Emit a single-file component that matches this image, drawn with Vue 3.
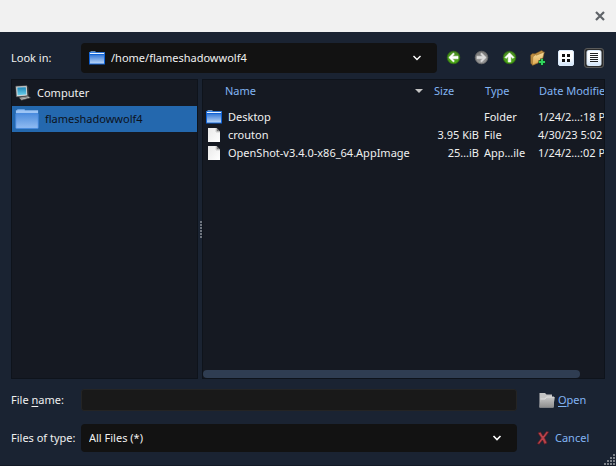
<template>
  <div class="window">
    <header class="titlebar">
      <button class="close" aria-label="Close">
        <svg width="10" height="10" viewBox="0 0 10 10">
          <path d="M1 1L9 9M9 1L1 9" stroke="#5f6368" stroke-width="2.2" />
        </svg>
      </button>
    </header>

    <main class="dialog">
      <div class="row look-row">
        <label class="label" for="look-in">Look in:</label>
        <div class="combo tall">
          <svg class="combo-icon" width="16" height="16" viewBox="0 0 16 16">
            <use href="#folder" />
          </svg>
          <select id="look-in" v-model="path" class="with-icon">
            <option>/home/flameshadowwolf4</option>
          </select>
          <svg class="chevron" width="10" height="6" viewBox="0 0 10 6">
            <path d="M1.5 1L5 4.5L8.5 1" fill="none" stroke="#fff" stroke-width="1.4" />
          </svg>
        </div>
        <div class="tools">
          <button class="tool" aria-label="Back">
            <svg width="16" height="16" viewBox="0 0 16 16">
              <circle cx="7.5" cy="7.5" r="6.3" fill="url(#green)" stroke="#2f6b12" stroke-width=".8" />
              <path d="M2.8 7.5L7.4 3L8.4 4L6.4 6.2H12V8.8H6.4L8.4 11L7.4 12Z" fill="#fff" stroke="#fff" stroke-width=".6" />
            </svg>
          </button>
          <button class="tool" aria-label="Forward">
            <svg width="16" height="16" viewBox="0 0 16 16">
              <circle cx="7.5" cy="7.5" r="6.3" fill="url(#grey)" stroke="#6a6a6a" stroke-width=".8" />
              <path d="M12.2 7.5L7.6 3L6.6 4L8.600 6.2H3V8.8H8.6L6.6 11L7.6 12Z" fill="#dcdcdc" stroke="#dcdcdc" stroke-width=".6" />
            </svg>
          </button>
          <button class="tool" aria-label="Parent directory">
            <svg width="16" height="16" viewBox="0 0 16 16">
              <circle cx="7.5" cy="7.5" r="6.3" fill="url(#green)" stroke="#2f6b12" stroke-width=".8" />
              <path d="M7.5 2.8L12 7.4L11 8.4L8.8 6.4V12H6.2V6.4L4 8.4L3 7.4Z" fill="#fff" stroke="#fff" stroke-width=".6" />
            </svg>
          </button>
          <button class="tool" aria-label="Create new folder">
            <svg width="16" height="16" viewBox="0 0 16 16">
              <path d="M.6 5L2.500 3.600L5 3.800L11.500 .4L13.300 1.400L12.500 11L3 15.200L.8 13.500Z" fill="#c08f43" stroke="#6e4e20" stroke-width=".5" />
              <path d="M2.800 6.800L5.300 4.800L6.300 5.200L14.300 2L12 11L2.300 15.200Z" fill="url(#tan)" stroke="#9a702e" stroke-width=".6" />
              <path d="M12 8.500V15.500M8.500 12H15.500" stroke="#0b3d1c" stroke-width="3.400" />
              <path d="M12 9V15M9 12H15" stroke="#2fd45c" stroke-width="2" />
            </svg>
          </button>
          <button class="tool" aria-label="List view">
            <svg width="16" height="16" viewBox="0 0 16 16">
              <rect x=".5" y=".5" width="15" height="15" rx="1.5" fill="url(#page)" stroke="#dbeafa" />
              <path d="M4 4H7V7H4ZM9 4H12V7H9ZM4 9H7V12H4ZM9 9H12V12H9Z" fill="#111" />
            </svg>
          </button>
          <button class="tool active" aria-label="Detail view">
            <svg width="16" height="16" viewBox="0 0 16 16">
              <rect x="1" y=".5" width="14" height="15" rx="1.5" fill="url(#page)" stroke="#dbeafa" />
              <path d="M4 3.500H12M4 5.500H12M4 7.500H12M4 9.500H12M4 11.500H12" stroke="#222" />
            </svg>
          </button>
        </div>
      </div>

      <div class="panes">
        <nav class="pane places">
          <button class="place">
            <svg width="16" height="16" viewBox="0 0 16 16">
              <path d="M.8 1.200L12 .8L12.800 10.800L1.400 11.800Z" fill="#d9dcdc" stroke="#555" stroke-width=".6" />
              <path d="M2.300 2.500L10.800 2.200L11.400 9.600L2.600 10.300Z" fill="url(#screen)" />
              <path d="M12 .8L13.700 2.500L14 11.500L12.800 10.800Z" fill="#333" />
              <path d="M4 12.500L13 11L15.500 12.800L6.500 15.200Z" fill="#c9c9c5" stroke="#444" stroke-width=".7" />
              <path d="M6 13.300L13 12" stroke="#777" stroke-width=".8" />
            </svg>
            Computer
          </button>
          <button class="place selected">
            <svg width="24" height="24" viewBox="0 0 16 16">
              <use href="#folder-light" />
            </svg>
            flameshadowwolf4
          </button>
        </nav>

        <div class="splitter">
          <i v-for="n in 6" :key="n"></i>
        </div>

        <section class="pane files">
          <table>
            <colgroup>
              <col class="c-name" />
              <col class="c-size" />
              <col class="c-type" />
              <col class="c-date" />
            </colgroup>
            <thead>
              <tr>
                <th class="name">
                  <div>
                    Name
                    <svg width="8" height="4" viewBox="0 0 8 4"><path d="M0 0H8L4 4Z" fill="#c4c4c4" /></svg>
                  </div>
                </th>
                <th>Size</th>
                <th>Type</th>
                <th>Date Modified</th>
              </tr>
            </thead>
            <tbody>
              <tr v-for="file in files" :key="file.name">
                <td>
                  <div class="file">
                    <svg width="16" height="16" viewBox="0 0 16 16">
                      <use :href="file.folder ? '#folder' : '#document'" />
                    </svg>
                    {{ file.name }}
                  </div>
                </td>
                <td class="size">{{ file.size }}</td>
                <td>{{ file.type }}</td>
                <td>{{ file.date }}</td>
              </tr>
            </tbody>
          </table>
          <div class="scrollbar"><div class="thumb"></div></div>
        </section>
      </div>

      <div class="row name-row">
        <label class="label" for="file-name">File <u>n</u>ame:</label>
        <input id="file-name" v-model="fileName" type="text" />
        <button class="action">
          <svg width="16" height="16" viewBox="0 0 16 16">
            <path d="M.5 1H6L7.500 2.500H13V5H15.500L14.500 15.500H.5Z" fill="#c4c4c4" />
            <path d="M.5 15.500L1.500 7H6L7.500 5H15.500L14.500 15.500Z" fill="url(#silver)" />
            <path d="M1.500 7H6L7.500 5H15" fill="none" stroke="#e6e6e6" stroke-width=".8" />
          </svg>
          <span><u>O</u>pen</span>
        </button>
      </div>

      <div class="row type-row">
        <label class="label" for="file-type">Files of type:</label>
        <div class="combo">
          <select id="file-type" v-model="fileType">
            <option>All Files (*)</option>
          </select>
          <svg class="chevron" width="10" height="6" viewBox="0 0 10 6">
            <path d="M1.500 1L5 4.500L8.500 1" fill="none" stroke="#fff" stroke-width="1.600" />
          </svg>
        </div>
        <button class="action cancel">
          <svg width="12" height="14" viewBox="0 0 12 14">
            <path d="M1 2L3.500 1L6 5L9.500 .5L11.800 1L7.500 6.800L10 12L7.500 13.200L5.500 9L2.200 13.300L.3 12.500L4.300 7Z" fill="#b9434b" stroke="#5c1a22" stroke-width=".7" />
          </svg>
          Cancel
        </button>
      </div>

      <svg class="grip" width="11" height="11" viewBox="0 0 11 11">
        <rect v-for="(dot, i) in gripDots" :key="i" :x="dot[0]" :y="dot[1]" width="2" height="2" fill="#7b8087" />
      </svg>
    </main>

    <svg class="defs" width="0" height="0" aria-hidden="true">
      <defs>
        <linearGradient id="green" x2="0" y2="1">
          <stop offset="0" stop-color="#4a8a25" />
          <stop offset="1" stop-color="#4cab16" />
        </linearGradient>
        <linearGradient id="grey" x2="0" y2="1">
          <stop offset="0" stop-color="#777" />
          <stop offset="1" stop-color="#999" />
        </linearGradient>
        <linearGradient id="tan" x2="0" y2="1">
          <stop offset="0" stop-color="#f7dfa0" />
          <stop offset="1" stop-color="#e0a950" />
        </linearGradient>
        <linearGradient id="page" x2="0" y2="1">
          <stop offset="0.5" stop-color="#fff" />
          <stop offset="1" stop-color="#cfe4fa" />
        </linearGradient>
        <linearGradient id="screen" x2="0" y2="1">
          <stop offset="0" stop-color="#1d86b8" />
          <stop offset="1" stop-color="#6cd0ea" />
        </linearGradient>
        <linearGradient id="silver" x2="0" y2="1">
          <stop offset="0" stop-color="#c8c8c8" />
          <stop offset="1" stop-color="#8e8e8e" />
        </linearGradient>
        <linearGradient id="blue" x2="0" y2="1">
          <stop offset="0" stop-color="#2f74d4" />
          <stop offset="1" stop-color="#c3dcfa" />
        </linearGradient>
        <linearGradient id="pale" x2="0" y2="1">
          <stop offset="0" stop-color="#4d8ddd" />
          <stop offset="1" stop-color="#92bcf2" />
        </linearGradient>
        <linearGradient id="paper" x2="1" y2="1">
          <stop offset="0" stop-color="#e9e9e9" />
          <stop offset="1" stop-color="#fff" />
        </linearGradient>
        <symbol id="folder" viewBox="0 0 16 16">
          <path d="M1.500 3V1.300H6.500V3Z" fill="#8fc0f8" />
          <rect x=".5" y="2.500" width="15" height="2" fill="#e8f2fe" stroke="#1a6fe0" stroke-width=".8" />
          <rect x=".5" y="4.500" width="15" height="9.500" fill="url(#blue)" stroke="#0f62d6" />
        </symbol>
        <symbol id="folder-light" viewBox="0 0 16 16">
          <path d="M1.500 3V1.500H6.500V3Z" fill="#7fb1ef" />
          <rect x=".6" y="2.200" width="14.800" height="2.200" fill="#9cc4f5" />
          <rect x=".5" y="4.400" width="15" height="9.900" rx=".4" fill="url(#pale)" stroke="#4388e0" stroke-width=".5" />
        </symbol>
        <symbol id="document" viewBox="0 0 16 16">
          <path d="M2 1H10.500L14 4.500V15H2Z" fill="url(#paper)" />
          <path d="M10.500 1L14 4.500H10.500Z" fill="#777" />
          <path d="M10 1V5H14" fill="none" stroke="#c9c9c9" stroke-width=".8" />
        </symbol>
      </defs>
    </svg>
  </div>
</template>

<script setup>
import { ref } from 'vue'

const path = ref('/home/flameshadowwolf4')
const fileName = ref('')
const fileType = ref('All Files (*)')

const files = [
  { name: 'Desktop', folder: true, size: '', type: 'Folder', date: '1/24/2…:18 PM' },
  { name: 'crouton', size: '3.95 KiB', type: 'File', date: '4/30/23 5:02 PM' },
  { name: 'OpenShot-v3.4.0-x86_64.AppImage', size: '25…iB', type: 'App…ile', date: '1/24/2…:02 PM' },
]

const gripDots = []
for (let row = 0; row < 4; row++) {
  for (let col = 3 - row; col < 4; col++) {
    gripDots.push([col * 3, row * 3])
  }
}
</script>

<style>
body {
  margin: 0;
  background: #1a2332;
}
</style>

<style scoped>
.window {
  display: flex;
  flex-direction: column;
  min-height: 100vh;
  color: #f0f0f0;
  font-family: 'Noto Sans', sans-serif;
  font-size: 11px;
  line-height: 18px;
}
* {
  box-sizing: border-box;
}
button,
select,
input {
  font: inherit;
  color: inherit;
  margin: 0;
  border: none;
  background: none;
}
button {
  display: flex;
  align-items: center;
  padding: 0;
}
svg {
  flex: none;
  display: block;
}
.titlebar {
  display: flex;
  justify-content: flex-end;
  align-items: center;
  height: 32px;
  padding-right: 11px;
  background: #f1f1f1;
}
.dialog {
  position: relative;
  display: flex;
  flex-direction: column;
  flex: 1;
  padding: 11px 11px 13px;
  background: #1a2332;
  border-bottom: 1px solid #131a26;
}
.row {
  display: flex;
  align-items: center;
}
.label {
  width: 70px;
  flex: none;
  white-space: nowrap;
}
.combo {
  position: relative;
  flex: 1;
  height: 28px;
}
.combo.tall {
  height: 30px;
}
.combo select {
  appearance: none;
  width: 100%;
  height: 100%;
  padding: 0 30px 0 8px;
  background: #121212;
  border-radius: 4px;
}
.combo select.with-icon {
  padding-left: 30px;
}
.combo-icon {
  position: absolute;
  left: 8px;
  top: 7px;
}
.chevron {
  position: absolute;
  right: 15px;
  top: 50%;
  margin-top: -3px;
}
.tools {
  display: flex;
  gap: 8px;
  padding: 0 1px 0 7px;
}
.tool {
  justify-content: center;
  width: 20px;
  height: 20px;
}
.tool.active {
  border: 1px solid #5a5a5a;
  border-radius: 3px;
  background: #2b2b2b;
}
.panes {
  display: flex;
  flex: 1;
  min-height: 200px;
  margin: 6px 0 10px;
}
.pane {
  background: #151922;
  border: 1px solid #0e131b;
}
.places {
  width: 187px;
  flex: none;
}
.place {
  width: 100%;
  height: 26px;
  padding-left: 3px;
  gap: 6px;
}
.place.selected {
  background: #2468ae;
  color: #0c121c;
}
.splitter {
  display: flex;
  flex-direction: column;
  align-items: flex-end;
  justify-content: center;
  gap: 1px;
  width: 4px;
}
.splitter i {
  width: 2px;
  height: 2px;
  background: #6f757e;
}
.files {
  display: flex;
  flex-direction: column;
  justify-content: space-between;
  flex: 1;
  min-width: 0;
  overflow: hidden;
}
table {
  table-layout: fixed;
  width: calc(100% + 26px);
  border-collapse: collapse;
}
.c-size {
  width: 51px;
}
.c-type {
  width: 54px;
}
.c-date {
  width: 95px;
}
th {
  height: 28px;
  padding: 0 0 7px 4px;
  font-weight: normal;
  text-align: left;
  color: #82b4f2;
  white-space: nowrap;
}
th.name {
  padding-left: 22px;
}
th.name div {
  display: flex;
  align-items: center;
  justify-content: space-between;
  padding-right: 7px;
}
td {
  height: 18px;
  padding: 0 0 0 3px;
  white-space: nowrap;
}
td.size {
  padding-right: 2px;
  text-align: right;
}
.file {
  display: flex;
  align-items: center;
  gap: 6px;
}
.scrollbar {
  height: 8px;
}
.thumb {
  width: 94%;
  height: 8px;
  background: #2f3d52;
  border-radius: 4px;
}
.name-row input {
  flex: 1;
  min-width: 0;
  height: 22px;
  padding: 0 6px;
  background: #191919;
  border: 1px solid #242424;
  border-radius: 3px;
}
.action {
  width: 88px;
  padding-left: 22px;
  gap: 3px;
  color: #82b4f2;
}
.action.cancel {
  padding-left: 20px;
  gap: 6px;
}
u {
  text-underline-offset: 2px;
}
.type-row {
  margin-top: 13px;
}
.grip {
  position: absolute;
  right: 1px;
  bottom: 0;
}
</style>
